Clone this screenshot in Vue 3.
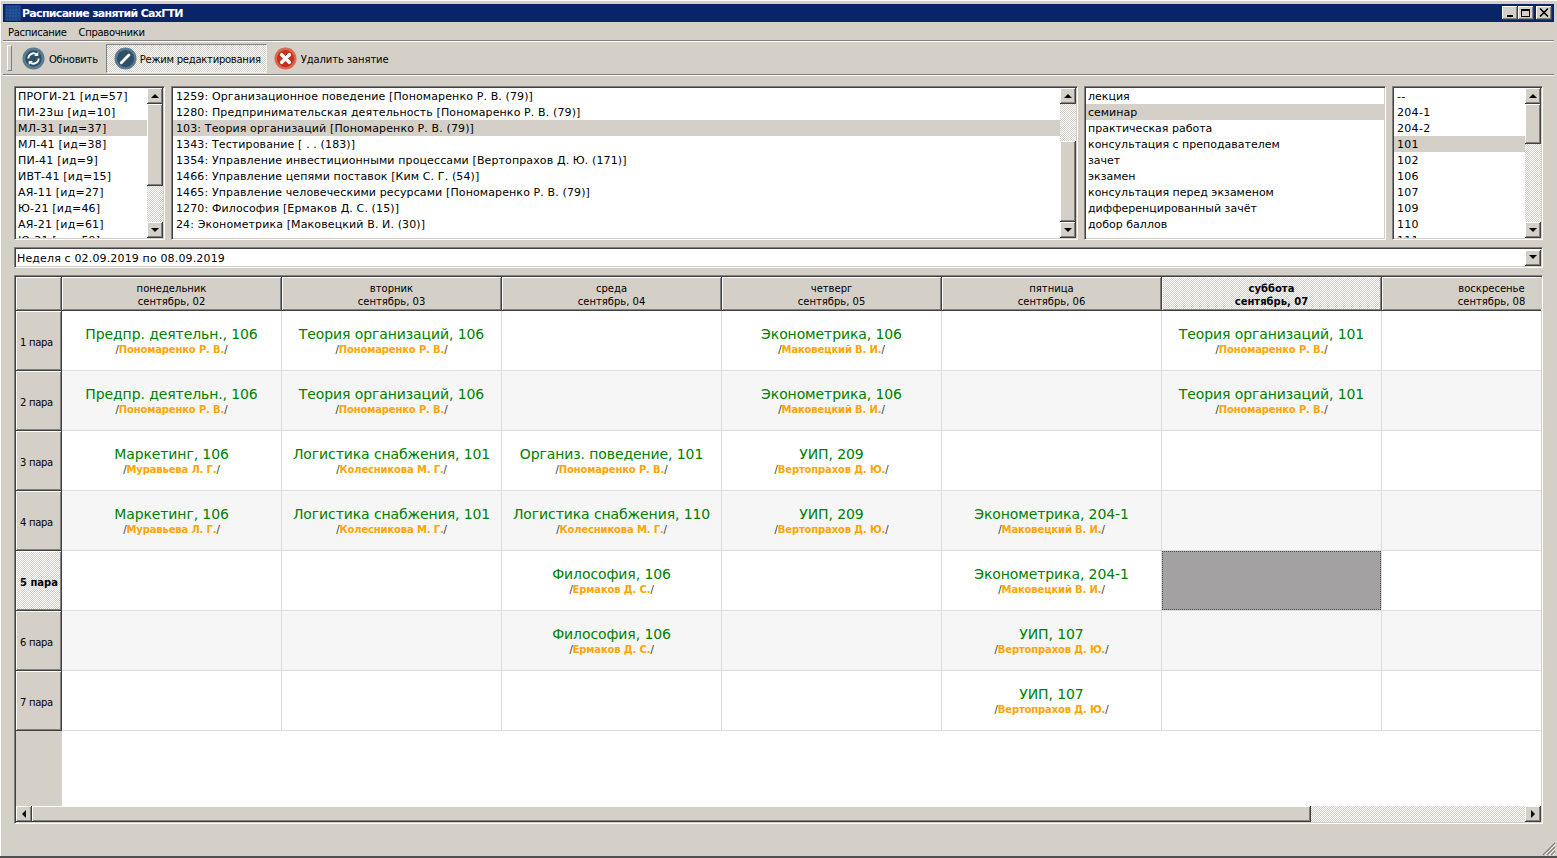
<script setup>
const groups = ["ПРОГИ-21 [ид=57]", "ПИ-23ш [ид=10]", "МЛ-31 [ид=37]", "МЛ-41 [ид=38]", "ПИ-41 [ид=9]", "ИВТ-41 [ид=15]", "АЯ-11 [ид=27]", "Ю-21 [ид=46]", "АЯ-21 [ид=61]", "Ю-31 [ид=59]"];
const subjects = [
  "1259: Организационное поведение [Пономаренко Р. В. (79)]",
  "1280: Предпринимательская деятельность [Пономаренко Р. В. (79)]",
  "103: Теория организаций [Пономаренко Р. В. (79)]",
  "1343: Тестирование [ . . (183)]",
  "1354: Управление инвестиционными процессами [Вертопрахов Д. Ю. (171)]",
  "1466: Управление цепями поставок [Ким С. Г. (54)]",
  "1465: Управление человеческими ресурсами [Пономаренко Р. В. (79)]",
  "1270: Философия [Ермаков Д. С. (15)]",
  "24: Эконометрика [Маковецкий В. И. (30)]",
];
const kinds = ["лекция", "семинар", "практическая работа", "консультация с преподавателем", "зачет", "экзамен", "консультация перед экзаменом", "дифференцированный зачёт", "добор баллов"];
const rooms = ["--", "204-1", "204-2", "101", "102", "106", "107", "109", "110", "111"];

const days = [
  { name: "понедельник", date: "сентябрь, 02" },
  { name: "вторник", date: "сентябрь, 03" },
  { name: "среда", date: "сентябрь, 04" },
  { name: "четверг", date: "сентябрь, 05" },
  { name: "пятница", date: "сентябрь, 06" },
  { name: "суббота", date: "сентябрь, 07", current: true },
  { name: "воскресенье", date: "сентябрь, 08" },
];

const pon = "Пономаренко Р. В.";
const mak = "Маковецкий В. И.";
const ver = "Вертопрахов Д. Ю.";
const kol = "Колесникова М. Г.";
const mur = "Муравьева Л. Г.";
const erm = "Ермаков Д. С.";

const rows = [
  [["Предпр. деятельн., 106", pon], ["Теория организаций, 106", pon], null, ["Эконометрика, 106", mak], null, ["Теория организаций, 101", pon], null],
  [["Предпр. деятельн., 106", pon], ["Теория организаций, 106", pon], null, ["Эконометрика, 106", mak], null, ["Теория организаций, 101", pon], null],
  [["Маркетинг, 106", mur], ["Логистика снабжения, 101", kol], ["Организ. поведение, 101", pon], ["УИП, 209", ver], null, null, null],
  [["Маркетинг, 106", mur], ["Логистика снабжения, 101", kol], ["Логистика снабжения, 110", kol], ["УИП, 209", ver], ["Эконометрика, 204-1", mak], null, null],
  [null, null, ["Философия, 106", erm], null, ["Эконометрика, 204-1", mak], "selected", null],
  [null, null, ["Философия, 106", erm], null, ["УИП, 107", ver], null, null],
  [null, null, null, null, ["УИП, 107", ver], null, null],
];
</script>

<template>
  <div class="window">
    <div class="titlebar">
      <svg class="app-icon" width="16" height="16" viewBox="0 0 16 16">
        <rect x="1" y="1" width="14" height="14" fill="#1a3f80" stroke="#2b5aa0" />
        <path d="M1 5h14M1 8h14M1 11h14M5 1v14M8 1v14M11 1v14" stroke="#2b5aa0" stroke-width="1" />
      </svg>
      <span class="title-text">Расписание занятий СахГТИ</span>
      <div class="win-buttons">
        <div class="win-btn raised"><span class="min-mark"></span></div>
        <div class="win-btn raised"><span class="max-mark"></span></div>
        <div class="win-btn raised close-btn">
          <svg width="10" height="9" viewBox="0 0 10 9"><path d="M1 0.5l8 8M9 0.5l-8 8" stroke="#000" stroke-width="1.6" /></svg>
        </div>
      </div>
    </div>

    <div class="menubar">
      <span>Расписание</span>
      <span>Справочники</span>
    </div>

    <div class="toolbar">
      <div class="grip"></div>
      <div class="tool">
        <svg width="23" height="23" viewBox="0 0 24 24">
          <circle cx="12" cy="12" r="11.5" fill="#5b7c90" />
          <circle cx="12" cy="12" r="8.5" fill="#2d4f68" />
          <path d="M6.6 12a5.4 5.4 0 0 1 9-4" fill="none" stroke="#fff" stroke-width="1.9" />
          <path d="M17.4 12a5.4 5.4 0 0 1-9 4" fill="none" stroke="#fff" stroke-width="1.9" />
          <path d="M17 5.2v4.3h-4.3zM7 18.8v-4.3h4.3z" fill="#fff" />
        </svg>
        <span>Обновить</span>
      </div>
      <div class="tool tool-active">
        <svg width="23" height="23" viewBox="0 0 24 24">
          <circle cx="12" cy="12" r="11.5" fill="#5b7c90" />
          <circle cx="12" cy="12" r="9" fill="#2d4f68" />
          <path d="M7.6 16.4l8-8" stroke="#fff" stroke-width="3" stroke-linecap="round" />
          <path d="M6.8 17.2l1-2.4 1.4 1.4z" fill="#fff" />
        </svg>
        <span>Режим редактирования</span>
      </div>
      <div class="tool tool-delete">
        <svg width="23" height="23" viewBox="0 0 24 24">
          <circle cx="12" cy="12" r="11.5" fill="#d96a52" />
          <circle cx="12" cy="12" r="9" fill="#c3311c" />
          <path d="M8 8l8 8M16 8l-8 8" stroke="#fff" stroke-width="3.6" stroke-linecap="round" />
        </svg>
        <span>Удалить занятие</span>
      </div>
    </div>

    <div class="content">
      <div class="lists">
        <div class="list sunken">
          <div class="items items-groups">
            <div v-for="(g, i) in groups" :key="g" class="item" :class="{ selected: i === 2 }">{{ g }}</div>
          </div>
          <div class="vscroll">
            <div class="sbtn raised"><i class="tri up"></i></div>
            <div class="track"><div class="thumb raised thumb-groups"></div></div>
            <div class="sbtn raised"><i class="tri down"></i></div>
          </div>
        </div>

        <div class="list sunken">
          <div class="items items-subjects">
            <div v-for="(s, i) in subjects" :key="s" class="item" :class="{ selected: i === 2 }">{{ s }}</div>
          </div>
          <div class="vscroll">
            <div class="sbtn raised"><i class="tri up"></i></div>
            <div class="track"><div class="thumb raised thumb-subjects"></div></div>
            <div class="sbtn raised"><i class="tri down"></i></div>
          </div>
        </div>

        <div class="list sunken">
          <div class="items items-kinds">
            <div v-for="(k, i) in kinds" :key="k" class="item" :class="{ selected: i === 1 }">{{ k }}</div>
          </div>
        </div>

        <div class="list sunken">
          <div class="items items-rooms">
            <div v-for="(r, i) in rooms" :key="r" class="item" :class="{ selected: i === 3 }">{{ r }}</div>
          </div>
          <div class="vscroll">
            <div class="sbtn raised"><i class="tri up"></i></div>
            <div class="track"><div class="thumb raised thumb-rooms"></div></div>
            <div class="sbtn raised"><i class="tri down"></i></div>
          </div>
        </div>
      </div>

      <div class="combo sunken">
        <span class="combo-text">Неделя с 02.09.2019 по 08.09.2019</span>
        <div class="sbtn raised"><i class="tri down"></i></div>
      </div>

      <div class="table sunken">
        <div class="table-body">
          <div class="table-row head-row">
            <div class="corner raised"></div>
            <div v-for="d in days" :key="d.name" class="day raised" :class="{ current: d.current }">
              <span>{{ d.name }}</span>
              <span>{{ d.date }}</span>
            </div>
          </div>
          <div v-for="(row, r) in rows" :key="r" class="table-row lesson-row" :class="{ odd: r % 2 === 1 }">
            <div class="pair raised" :class="{ current: r === 4 }">{{ r + 1 }} пара</div>
            <div v-for="(cell, c) in row" :key="c" class="cell">
              <div v-if="cell === 'selected'" class="picked"></div>
              <template v-else-if="cell">
                <div class="subject">{{ cell[0] }}</div>
                <div class="teacher">/<b>{{ cell[1] }}</b>/</div>
              </template>
            </div>
          </div>
          <div class="table-rest"><div class="rest-side"></div></div>
        </div>
        <div class="hscroll">
          <div class="sbtn raised"><i class="tri left"></i></div>
          <div class="hthumb raised"></div>
          <div class="htrack"></div>
          <div class="sbtn raised"><i class="tri right"></i></div>
        </div>
      </div>
    </div>

    <svg class="size-grip" width="14" height="14" viewBox="0 0 14 14">
      <path d="M13 1L1 13M13 5L5 13M13 9L9 13" stroke="#808080" stroke-width="1.2" />
      <path d="M13 3L3 13M13 7L7 13M13 11L11 13" stroke="#fff" stroke-width="1" />
    </svg>
  </div>
</template>

<style scoped>
.window {
  position: relative;
  box-sizing: border-box;
  width: 1557px;
  height: 858px;
  padding: 4px 3px 0;
  display: flex;
  flex-direction: column;
  background: #d4d0c8;
  border-bottom: 2px solid #505050;
  box-shadow: inset 1px 1px 0 #fff;
  font-family: "DejaVu Sans", sans-serif;
  font-size: 11px;
  color: #000;
  overflow: hidden;
}

.raised {
  box-sizing: border-box;
  background-color: #d4d0c8;
  border-right: 1px solid #404040;
  border-bottom: 1px solid #404040;
  box-shadow: inset 1px 1px 0 #fff, inset -1px -1px 0 #808080;
}

.sunken {
  box-sizing: border-box;
  padding: 1px;
  border: 1px solid;
  border-color: #808080 #fff #fff #808080;
  box-shadow: inset 1px 1px 0 #404040, inset -1px -1px 0 #d4d0c8;
  background: #fff;
}

.titlebar {
  height: 18px;
  flex: none;
  display: flex;
  align-items: center;
  padding: 0 2px;
  background: #0a246a;
  color: #fff;
}

.app-icon {
  flex: none;
}

.title-text {
  margin-left: 1px;
  font-weight: bold;
  letter-spacing: -0.7px;
}

.win-buttons {
  margin-left: auto;
  display: flex;
}

.win-btn {
  width: 16px;
  height: 14px;
  display: flex;
  align-items: center;
  justify-content: center;
}

.close-btn {
  margin-left: 2px;
}

.min-mark {
  width: 6px;
  height: 2px;
  background: #000;
  margin-top: 7px;
}

.max-mark {
  width: 9px;
  height: 8px;
  box-sizing: border-box;
  border: 1px solid #000;
  border-top-width: 2px;
}

.menubar {
  height: 18px;
  flex: none;
  box-sizing: border-box;
  padding: 2px 0 0 5px;
  display: flex;
  align-items: center;
  gap: 12px;
  font-size: 10px;
  letter-spacing: -0.3px;
}

.toolbar {
  flex: none;
  height: 36px;
  box-sizing: border-box;
  position: relative;
  display: flex;
  align-items: center;
  border-top: 1px solid #808080;
  border-bottom: 1px solid #fff;
  box-shadow: inset 0 1px 0 #fff;
  font-size: 10px;
  letter-spacing: -0.25px;
}

.toolbar::after {
  content: "";
  position: absolute;
  left: 0;
  right: 0;
  bottom: 0;
  height: 1px;
  background: #808080;
}

.grip {
  width: 5px;
  height: 26px;
  margin-left: 4px;
  margin-right: 10px;
  box-sizing: border-box;
  border: 1px solid;
  border-color: #fff #808080 #808080 #fff;
}

.tool {
  display: flex;
  align-items: center;
  gap: 4px;
  height: 29px;
  padding-right: 8px;
}

.tool svg {
  flex: none;
}

.tool span {
  padding-top: 2px;
}

.tool-active {
  box-sizing: border-box;
  padding: 0 5px 0 7px;
  gap: 3px;
  border: 1px solid;
  border-color: #808080 #f4f2ee #f4f2ee #808080;
  background: repeating-conic-gradient(#fff 0 25%, #d4d0c8 0 50%) 0 0 / 2px 2px;
}

.tool-delete {
  margin-left: 7px;
  gap: 4px;
  letter-spacing: -0.1px;
}

.content {
  flex: 1;
  min-height: 0;
  display: flex;
  flex-direction: column;
  gap: 7px;
  padding: 10px 11px 32px;
}

.lists {
  flex: none;
  display: grid;
  grid-template-columns: 151px 907px 302px 151px;
  column-gap: 6px;
  height: 154px;
}

.list {
  display: flex;
  min-width: 0;
  overflow: hidden;
}

.items {
  flex: 1;
  min-width: 0;
  overflow: hidden;
}

.item {
  height: 16px;
  line-height: 18px;
  padding-left: 3px;
  white-space: nowrap;
}

.items-groups {
  letter-spacing: 0.2px;
}

.items-groups .item,
.items-kinds .item {
  padding-left: 2px;
}

.items-subjects {
  letter-spacing: 0.12px;
}

.items-rooms {
  letter-spacing: 0.3px;
}

.item.selected {
  background: #d4d0c8;
}

.vscroll {
  flex: none;
  width: 16px;
  display: flex;
  flex-direction: column;
}

.sbtn {
  flex: none;
  width: 16px;
  height: 16px;
  display: flex;
  align-items: center;
  justify-content: center;
}

.tri {
  display: block;
  width: 0;
  height: 0;
  border: 4px solid transparent;
}

.tri.up {
  border-top-width: 0;
  border-bottom-color: #000;
}

.tri.down {
  border-bottom-width: 0;
  border-top-color: #000;
}

.tri.left {
  border-left-width: 0;
  border-right-color: #000;
}

.tri.right {
  border-right-width: 0;
  border-left-color: #000;
}

.track,
.htrack {
  flex: 1;
  background: repeating-conic-gradient(#fff 0 25%, #d4d0c8 0 50%) 0 0 / 2px 2px;
}

.thumb-groups {
  height: 82px;
}

.thumb-subjects {
  height: 81px;
  margin-top: 37px;
}

.thumb-rooms {
  height: 40px;
}

.combo {
  flex: none;
  height: 21px;
  display: flex;
  align-items: center;
  justify-content: space-between;
}

.combo-text {
  padding: 2px 0 0 1px;
  letter-spacing: 0.15px;
}

.table {
  flex: 1;
  min-height: 0;
  display: flex;
  flex-direction: column;
  overflow: hidden;
}

.table-body {
  flex: 1;
  min-height: 0;
  display: flex;
  flex-direction: column;
  overflow: hidden;
}

.table-row {
  flex: none;
  display: flex;
}

.head-row {
  height: 34px;
}

.lesson-row {
  height: 60px;
}

.lesson-row.odd {
  background: #f6f6f6;
}

.corner,
.pair {
  flex: none;
  width: 46px;
}

.pair {
  padding: 3px 0 0 4px;
  display: flex;
  align-items: center;
  font-size: 10px;
  letter-spacing: -0.3px;
}

.pair.current {
  letter-spacing: 0;
}

.day {
  flex: none;
  width: 220px;
  padding-top: 2px;
  display: flex;
  flex-direction: column;
  align-items: center;
  justify-content: center;
  line-height: 13px;
  font-size: 10px;
}

.current {
  background: repeating-conic-gradient(#fff 0 25%, #d4d0c8 0 50%) 0 0 / 2px 2px;
  font-weight: bold;
}

.cell {
  flex: none;
  box-sizing: border-box;
  width: 220px;
  display: flex;
  flex-direction: column;
  align-items: center;
  justify-content: center;
  border-right: 1px solid #dcdcdc;
  border-bottom: 1px solid #dcdcdc;
}

.subject {
  margin-top: 2px;
  font-size: 14px;
  line-height: 15px;
  letter-spacing: -0.1px;
  color: #008000;
}

.teacher {
  font-size: 10px;
  line-height: 15px;
  letter-spacing: -0.15px;
  color: #333;
}

.teacher b {
  color: #ffa500;
}

.picked {
  align-self: stretch;
  flex: 1;
  background: #a4a1a3;
  outline: 1px dotted #4a4a4a;
  outline-offset: -1px;
}

.table-rest {
  flex: 1;
  display: flex;
  background: #fff;
}

.rest-side {
  width: 46px;
  background: #d4d0c8;
}

.hscroll {
  flex: none;
  height: 16px;
  display: flex;
}

.hthumb {
  flex: none;
  width: 1279px;
}

.size-grip {
  position: absolute;
  right: 1px;
  bottom: 0;
}
</style>

<style>
html,
body {
  margin: 0;
  overflow: hidden;
}
</style>
